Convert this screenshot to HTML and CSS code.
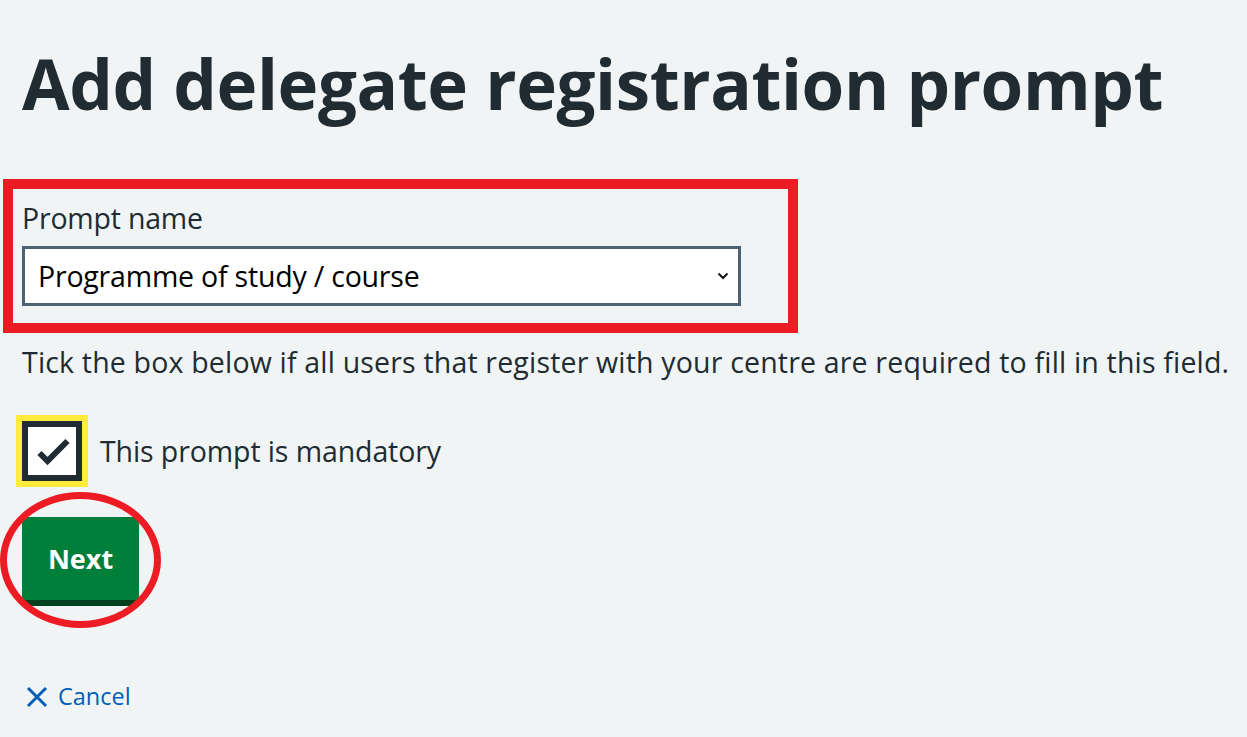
FILE: index.html
```html
<!DOCTYPE html>
<html lang="en">
<head>
<meta charset="utf-8">
<title>Add delegate registration prompt</title>
<link rel="stylesheet" href="styles.css">
</head>
<body>
<main class="page">
  <h1 class="title">Add delegate registration prompt</h1>
  <div class="annot-box">
    <label class="label" for="prompt">Prompt name</label>
    <div class="select">
      <span class="select-value">Programme of study / course</span>
      <svg class="chev" width="12" height="8" viewBox="0 0 12 8"><path d="M1.5 1.5 L6 6 L10.5 1.5" fill="none" stroke="#111" stroke-width="2"/></svg>
    </div>
  </div>
  <p class="hint">Tick the box below if all users that register with your centre are required to fill in this field.</p>
  <div class="check-row">
    <span class="checkbox">
      <svg width="48" height="48" viewBox="0 0 48 48"><path d="M11.5 26 L19.5 34 L39.5 14" fill="none" stroke="#212b32" stroke-width="6"/></svg>
    </span>
    <span class="check-label">This prompt is mandatory</span>
  </div>
  <div class="btn-wrap">
    <button class="btn">Next</button>
    <span class="annot-ellipse"></span>
  </div>
  <a class="cancel" href="#">
    <svg width="22" height="22" viewBox="0 0 22 22"><path d="M2 2 L20 20 M20 2 L2 20" stroke="#005eb8" stroke-width="3" fill="none"/></svg>
    <span>Cancel</span>
  </a>
</main>
</body>
</html>
```
FILE: styles.css
```css
html, body {
  margin: 0;
  padding: 0;
  background: #f0f4f5;
  color: #212b32;
  font-family: "Open Sans", "Noto Sans", sans-serif;
}
.page {
  padding: 0 0 0 22px;
  width: 1225px;
  height: 737px;
  overflow: hidden;
  display: flex;
  flex-direction: column;
  align-items: flex-start;
}
.title {
  margin: 35px 0 0 0;
  font-size: 69px;
  font-weight: 700;
  line-height: 96px;
  letter-spacing: -0.4px;
}
.annot-box {
  margin: 48px 0 0 -19px;
  width: 766px;
  height: 134px;
  border: 10px solid #ed1c24;
  padding: 0 0 0 9px;
  display: flex;
  flex-direction: column;
}
.label {
  font-size: 28.5px;
  line-height: 36px;
  margin-top: 11px;
  letter-spacing: -0.2px;
}
.select {
  margin-top: 10px;
  background: #fff;
  border: 3px solid #4c6272;
  display: flex;
  align-items: center;
  justify-content: space-between;
  padding: 0 9px 0 13px;
  box-sizing: border-box;
  width: 719px;
  height: 60px;
}
.select-value {
  font-size: 28.5px;
  color: #000;
  letter-spacing: -0.2px;
}
.hint {
  margin: 9px 0 0 0;
  font-size: 28.5px;
  line-height: 40px;
  letter-spacing: 0.18px;
}
.check-row {
  margin-top: 39px;
  display: flex;
  align-items: center;
  gap: 18px;
}
.checkbox {
  width: 60px;
  height: 60px;
  box-sizing: border-box;
  border: 6px solid #212b32;
  background: #fff;
  outline: 6px solid #ffeb3b;
  display: flex;
  align-items: center;
  justify-content: center;
}
.check-label {
  font-size: 28.5px;
  letter-spacing: -0.1px;
}
.btn-wrap {
  position: relative;
  margin-top: 36px;
}
.btn {
  width: 117px;
  height: 83px;
  border: 0;
  background: #007f3b;
  box-shadow: 0 6px 0 #00401e;
  color: #fff;
  font-family: inherit;
  font-size: 27px;
  font-weight: 700;
  padding: 0;
  border-radius: 0;
  display: block;
}
.annot-ellipse {
  position: absolute;
  left: -22px;
  top: -25px;
  width: 161px;
  height: 136px;
  box-sizing: border-box;
  border: 7px solid #ed1c24;
  border-radius: 50%;
}
.cancel {
  margin: 80px 0 0 4px;
  display: flex;
  align-items: center;
  gap: 10px;
  color: #005eb8;
  text-decoration: none;
  font-size: 23.5px;
  line-height: 33px;
}
```
